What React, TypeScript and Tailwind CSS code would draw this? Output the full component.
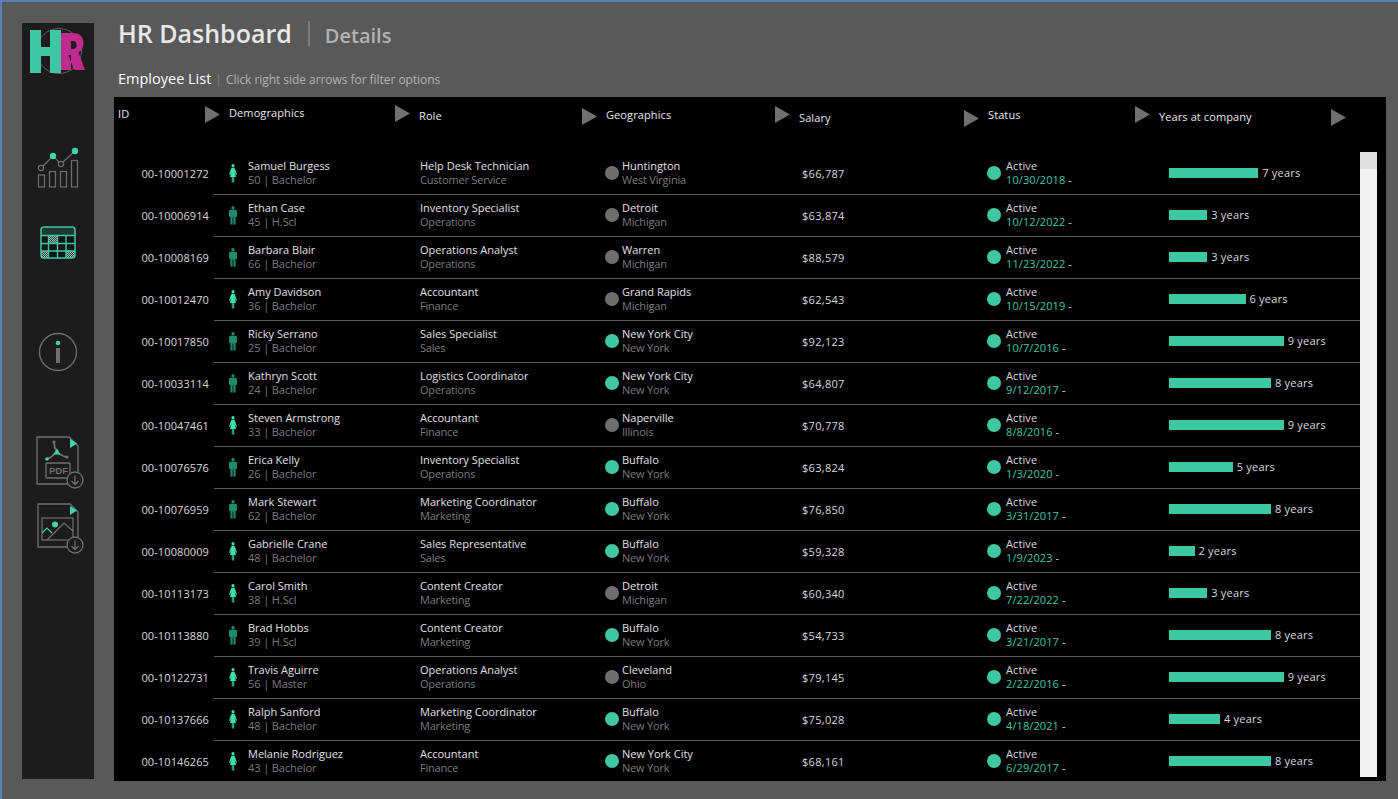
const font = "font-['Open_Sans','Liberation_Sans',sans-serif]";

type Employee = {
  id: string;
  name: string;
  age: number;
  edu: string;
  female: boolean;
  role: string;
  dept: string;
  city: string;
  state: string;
  ny: boolean;
  salary: string;
  date: string;
  years: number;
};

const employees: Employee[] = [
  { id: '00-10001272', name: 'Samuel Burgess', age: 50, edu: 'Bachelor', female: true, role: 'Help Desk Technician', dept: 'Customer Service', city: 'Huntington', state: 'West Virginia', ny: false, salary: '$66,787', date: '10/30/2018', years: 7 },
  { id: '00-10006914', name: 'Ethan Case', age: 45, edu: 'H.Scl', female: false, role: 'Inventory Specialist', dept: 'Operations', city: 'Detroit', state: 'Michigan', ny: false, salary: '$63,874', date: '10/12/2022', years: 3 },
  { id: '00-10008169', name: 'Barbara Blair', age: 66, edu: 'Bachelor', female: false, role: 'Operations Analyst', dept: 'Operations', city: 'Warren', state: 'Michigan', ny: false, salary: '$88,579', date: '11/23/2022', years: 3 },
  { id: '00-10012470', name: 'Amy Davidson', age: 36, edu: 'Bachelor', female: true, role: 'Accountant', dept: 'Finance', city: 'Grand Rapids', state: 'Michigan', ny: false, salary: '$62,543', date: '10/15/2019', years: 6 },
  { id: '00-10017850', name: 'Ricky Serrano', age: 25, edu: 'Bachelor', female: false, role: 'Sales Specialist', dept: 'Sales', city: 'New York City', state: 'New York', ny: true, salary: '$92,123', date: '10/7/2016', years: 9 },
  { id: '00-10033114', name: 'Kathryn Scott', age: 24, edu: 'Bachelor', female: false, role: 'Logistics Coordinator', dept: 'Operations', city: 'New York City', state: 'New York', ny: true, salary: '$64,807', date: '9/12/2017', years: 8 },
  { id: '00-10047461', name: 'Steven Armstrong', age: 33, edu: 'Bachelor', female: true, role: 'Accountant', dept: 'Finance', city: 'Naperville', state: 'Illinois', ny: false, salary: '$70,778', date: '8/8/2016', years: 9 },
  { id: '00-10076576', name: 'Erica Kelly', age: 26, edu: 'Bachelor', female: false, role: 'Inventory Specialist', dept: 'Operations', city: 'Buffalo', state: 'New York', ny: true, salary: '$63,824', date: '1/3/2020', years: 5 },
  { id: '00-10076959', name: 'Mark Stewart', age: 62, edu: 'Bachelor', female: false, role: 'Marketing Coordinator', dept: 'Marketing', city: 'Buffalo', state: 'New York', ny: true, salary: '$76,850', date: '3/31/2017', years: 8 },
  { id: '00-10080009', name: 'Gabrielle Crane', age: 48, edu: 'Bachelor', female: true, role: 'Sales Representative', dept: 'Sales', city: 'Buffalo', state: 'New York', ny: true, salary: '$59,328', date: '1/9/2023', years: 2 },
  { id: '00-10113173', name: 'Carol Smith', age: 38, edu: 'H.Scl', female: true, role: 'Content Creator', dept: 'Marketing', city: 'Detroit', state: 'Michigan', ny: false, salary: '$60,340', date: '7/22/2022', years: 3 },
  { id: '00-10113880', name: 'Brad Hobbs', age: 39, edu: 'H.Scl', female: false, role: 'Content Creator', dept: 'Marketing', city: 'Buffalo', state: 'New York', ny: true, salary: '$54,733', date: '3/21/2017', years: 8 },
  { id: '00-10122731', name: 'Travis Aguirre', age: 56, edu: 'Master', female: true, role: 'Operations Analyst', dept: 'Operations', city: 'Cleveland', state: 'Ohio', ny: false, salary: '$79,145', date: '2/22/2016', years: 9 },
  { id: '00-10137666', name: 'Ralph Sanford', age: 48, edu: 'Bachelor', female: true, role: 'Marketing Coordinator', dept: 'Marketing', city: 'Buffalo', state: 'New York', ny: true, salary: '$75,028', date: '4/18/2021', years: 4 },
  { id: '00-10146265', name: 'Melanie Rodriguez', age: 43, edu: 'Bachelor', female: true, role: 'Accountant', dept: 'Finance', city: 'New York City', state: 'New York', ny: true, salary: '$68,161', date: '6/29/2017', years: 8 },
];

const columns = [
  { label: 'ID', width: 'w-[115px] pl-1', labelTop: 'mt-[9px]', arrowTop: 'mt-[9px]' },
  { label: 'Demographics', width: 'w-[190px]', labelTop: 'mt-[8px]', arrowTop: 'mt-[8px]' },
  { label: 'Role', width: 'w-[187px]', labelTop: 'mt-[11px]', arrowTop: 'mt-[11px]' },
  { label: 'Geographics', width: 'w-[193px]', labelTop: 'mt-[10px]', arrowTop: 'mt-[9px]' },
  { label: 'Salary', width: 'w-[189px]', labelTop: 'mt-[13px]', arrowTop: 'mt-[13px]' },
  { label: 'Status', width: 'w-[171px]', labelTop: 'mt-[10px]', arrowTop: 'mt-[9px]' },
  { label: 'Years at company', width: 'w-[196px]', labelTop: 'mt-[12px]', arrowTop: 'mt-[12px]' },
];

function Arrow({ className }: { className: string }) {
  return (
    <svg width="15" height="17" viewBox="0 0 15 17" className={className}>
      <path d="M0 0 15 8.5 0 17Z" fill="#707070" />
    </svg>
  );
}

function Person({ female }: { female: boolean }) {
  if (female) {
    return (
      <svg width="8" height="19" viewBox="0 0 8 19" className="shrink-0">
        <g fill="#3fe0b0">
          <circle cx="4" cy="1.7" r="1.6" />
          <path d="M2.6 3.8h2.8L6.2 5.5 8 10.5 7 11 5.6 7.5 7 13H5.2v5.5H4.3V13H3.7v5.5H2.8V13H1L2.4 7.5 1 11 0 10.5 1.8 5.5Z" />
        </g>
      </svg>
    );
  }
  return (
    <svg width="8" height="19" viewBox="0 0 8 19" className="shrink-0">
      <g fill="#1f8a6e">
        <circle cx="4" cy="1.7" r="1.7" />
        <path d="M1.4 3.8h5.2c.8 0 1.4.6 1.4 1.4v5.6H6.6v7.700H4.400v-7h-.8v7H1.400V10.800H0V5.200c0-.8.600-1.400 1.400-1.400Z" />
      </g>
    </svg>
  );
}

function Logo() {
  return (
    <svg width="56" height="48" viewBox="0 0 56 48">
      <circle cx="29" cy="24" r="22.5" fill="none" stroke="#5f5f5f" strokeWidth="1" />
      <path d="M31 6h12c7 0 10.5 4 10.5 10.500 0 4.500-2 7.500-5 9L55 43H44L38.500 28H41V43H31Zm10 8v8h2c2.500 0 3.500-1.500 3.500-4s-1-4-3.500-4Z" fill="#bf2a8f" fillRule="evenodd" />
      <path d="M0 3h11v17h9V3h11v43H20V29h-9v17H0Z" fill="#3fc6a2" />
    </svg>
  );
}

function ChartIcon() {
  return (
    <svg width="44" height="42" viewBox="0 0 44 42" fill="none">
      <g stroke="#6e6e6e" strokeWidth="1.2">
        <rect x="2.5" y="28" width="6" height="12" />
        <rect x="13.5" y="24.5" width="6" height="15.5" />
        <rect x="24.5" y="24.5" width="6" height="15.5" />
        <rect x="35.5" y="13.5" width="6" height="26.5" />
        <path d="M5 21 17 9 25 17 39 4" />
        <circle cx="5" cy="21" r="2.6" fill="#1c1c1c" />
        <circle cx="25" cy="17" r="2.6" fill="#1c1c1c" />
      </g>
      <circle cx="17" cy="9" r="3.2" fill="#3fd6ab" />
      <circle cx="39" cy="4" r="3.2" fill="#3fd6ab" />
    </svg>
  );
}

function TableIcon() {
  return (
    <svg width="36" height="33" viewBox="0 0 36 33" fill="none">
      <defs>
        <pattern id="hatch" width="2" height="2" patternUnits="userSpaceOnUse">
          <rect width="2" height="2" fill="#2a4a42" />
          <rect width="1" height="1" fill="#9db5ae" />
          <rect x="1" y="1" width="1" height="1" fill="#9db5ae" />
        </pattern>
      </defs>
      <rect x="1" y="1" width="34" height="31" rx="3" fill="#111413" />
      <path d="M1 9.5V4a3 3 0 0 1 3-3h28a3 3 0 0 1 3 3v5.5Z" fill="#1f3a33" />
      <rect x="9" y="10" width="8" height="7" fill="url(#hatch)" />
      <rect x="1" y="25" width="8" height="7" fill="url(#hatch)" />
      <rect x="26" y="25" width="9" height="7" fill="url(#hatch)" />
      <rect x="1" y="1" width="34" height="31" rx="3" stroke="#3fc6a2" strokeWidth="1.5" />
      <path d="M1 9.5h34M1 17.5h34M1 25h34M8.500 9.500V32M17.500 9.500V32M26 9.500V32" stroke="#3fc6a2" strokeWidth="1.4" />
    </svg>
  );
}

function InfoIcon() {
  return (
    <svg width="40" height="40" viewBox="0 0 40 40" fill="none">
      <circle cx="20" cy="20" r="18.5" stroke="#707070" strokeWidth="1.3" />
      <circle cx="20" cy="11" r="2.3" fill="#3fd6ab" />
      <rect x="18" y="16" width="4" height="15" fill="#707070" />
    </svg>
  );
}

function PdfIcon() {
  return (
    <svg width="48" height="54" viewBox="0 0 48 54" fill="none">
      <path d="M1 48V1h32l9 9v38Z" stroke="#707070" strokeWidth="1.3" />
      <path d="M34 3v9l7-4.500Z" fill="#3fd6ab" />
      <path d="M18 6c0 4 1 7 3 10M11 23c3-1 6-3 8-6M31 21c-3 0-6-2-9-4" stroke="#707070" strokeWidth="1.8" />
      <circle cx="18" cy="6" r="1.6" fill="#707070" />
      <circle cx="31" cy="21" r="1.6" fill="#707070" />
      <path d="M21 12.500l3.500 6h-7Z" fill="#3fd6ab" />
      <circle cx="11" cy="23" r="1.8" fill="#3fd6ab" />
      <rect x="10" y="27" width="24" height="15" rx="1" fill="#1c1c1c" stroke="#707070" strokeWidth="1.3" />
      <text x="13" y="38" fontSize="9.5" fontWeight="700" fill="#707070" fontFamily="Liberation Sans">PDF</text>
      <circle cx="39" cy="44" r="8" fill="#1c1c1c" stroke="#707070" strokeWidth="1.3" />
      <path d="M39 39.500v9M35.500 45 39 48.500l3.500-3.500" stroke="#707070" strokeWidth="1.3" />
    </svg>
  );
}

function ImageIcon() {
  return (
    <svg width="48" height="52" viewBox="0 0 48 52" fill="none">
      <path d="M1 44V1h32l8 8v35Z" stroke="#707070" strokeWidth="1.3" />
      <path d="M33 3v9l7-4.500Z" fill="#3fd6ab" />
      <rect x="5" y="15" width="31" height="22" stroke="#707070" strokeWidth="1.2" />
      <path d="M10 37 27 20l9 8" stroke="#707070" strokeWidth="1.2" />
      <path d="M5 30l5-5 5 5" stroke="#3fd6ab" strokeWidth="1.2" />
      <circle cx="18" cy="21.5" r="3" fill="#3fd6ab" />
      <circle cx="38" cy="42" r="8" fill="#1c1c1c" stroke="#707070" strokeWidth="1.3" />
      <path d="M38 37.500v9M34.500 43 38 46.500l3.500-3.500" stroke="#707070" strokeWidth="1.3" />
    </svg>
  );
}

function Sidebar() {
  return (
    <aside className="w-[72px] shrink-0 bg-[#1c1c1c] flex flex-col items-start">
      <div className="mt-[4px] ml-[8px]"><Logo /></div>
      <div className="mt-[72px] ml-[14px]"><ChartIcon /></div>
      <div className="mt-[37px] ml-[18px]"><TableIcon /></div>
      <div className="mt-[73px] ml-[16px]"><InfoIcon /></div>
      <div className="mt-[64px] ml-[14px]"><PdfIcon /></div>
      <div className="mt-[13px] ml-[15px]"><ImageIcon /></div>
    </aside>
  );
}

function Row({ e }: { e: Employee }) {
  return (
    <div className="flex h-[42px] text-[11px] leading-[14px]">
      <div className="w-[95px] shrink-0 pt-[14px] text-right text-[#d9d9d9] tracking-[0.1px]">{e.id}</div>
      <div className="ml-[5px] flex-1 grid grid-cols-[206px_185px_197px_185px_182px_1fr] border-b border-[#5a5a5a]">
        <div className="flex items-start pl-[15px] pt-[11px]">
          <Person female={e.female} />
          <div className="ml-[11px] -mt-[5px]">
            <div className="font-medium text-[#e0e0e0]">{e.name}</div>
            <div className="text-[#7b7b7b] tracking-[-0.1px]">{e.age} | {e.edu}</div>
          </div>
        </div>
        <div className="pt-[6px]">
          <div className="font-medium text-[#e0e0e0]">{e.role}</div>
          <div className="text-[#7b7b7b] tracking-[-0.2px]">{e.dept}</div>
        </div>
        <div className="flex pt-[6px]">
          <div className={`mt-[7px] h-[14px] w-[14px] rounded-full ${e.ny ? 'bg-[#3fc6a2]' : 'bg-[#6e6e6e]'}`} />
          <div className="ml-[3px]">
            <div className="font-medium text-[#e0e0e0]">{e.city}</div>
            <div className="text-[#7b7b7b] tracking-[-0.2px]">{e.state}</div>
          </div>
        </div>
        <div className="pt-[14px] text-[#d9d9d9] font-medium tracking-[0.3px]">{e.salary}</div>
        <div className="flex pt-[6px] tracking-[0.1px]">
          <div className="mt-[7px] h-[14px] w-[14px] rounded-full bg-[#3fc6a2]" />
          <div className="ml-[5px]">
            <div className="text-[#d9d9d9]">Active</div>
            <div className="text-[#3fc6a2]">{e.date} <span className="text-[#d9d9d9]">-</span></div>
          </div>
        </div>
        <div className="flex items-center pb-[2px] tracking-[0.2px]">
          <div className="h-[10px] bg-[#3fc6a2]" style={{ width: e.years * 12.75 }} />
          <div className="ml-[4px] text-[#d9d9d9]">{e.years} years</div>
        </div>
      </div>
    </div>
  );
}

export default function App() {
  return (
    <div className={`${font} h-[799px] w-[1398px] overflow-hidden bg-[#595959] border-t-2 border-l-2 border-[#5b7fb5] flex pl-[20px] pt-[21px]`}>
      <div className="h-[756px] flex">
        <Sidebar />
      </div>
      <main className="ml-[20px] w-[1272px]">
        <div className="flex items-center pl-1 h-[26px] mt-[-3px]">
          <h1 className="text-[25px] font-semibold text-[#e8e8e8] leading-none">HR Dashboard</h1>
          <div className="ml-[16px] h-[25px] w-[2px] bg-[#7b7b7b]" />
          <div className="ml-[15px] text-[20px] font-semibold text-[#b3b3b3] mt-[6px]">Details</div>
        </div>
        <div className="flex items-baseline pl-1 mt-[22px] h-[21px]">
          <span className="text-[14.5px] text-white">Employee List</span>
          <span className="ml-[4px] text-[12px] text-[#7b7b7b]">|</span>
          <span className="ml-[4px] text-[12px] text-[#b3b3b3] tracking-[-0.05px]">Click right side arrows for filter options</span>
        </div>
        <div className="mt-[8px] h-[684px] bg-black overflow-hidden relative">
          <div className="flex h-[56px] text-[11px] tracking-[0.1px] leading-[16px] text-[#e6e6e6]">
            {columns.map((c) => (
              <div key={c.label} className={`${c.width} flex justify-between items-start pr-[9px] shrink-0`}>
                <span className={c.labelTop}>{c.label}</span>
                <Arrow className={c.arrowTop} />
              </div>
            ))}
          </div>
          <div className="w-[1246px]">
            {employees.map((e) => (
              <Row key={e.id} e={e} />
            ))}
          </div>
          <div className="absolute left-[1246px] top-[55px] w-[17px] h-[625px] bg-[#f3f3f3]">
            <div className="h-[17px] bg-[#dedede]" />
          </div>
        </div>
      </main>
    </div>
  );
}
